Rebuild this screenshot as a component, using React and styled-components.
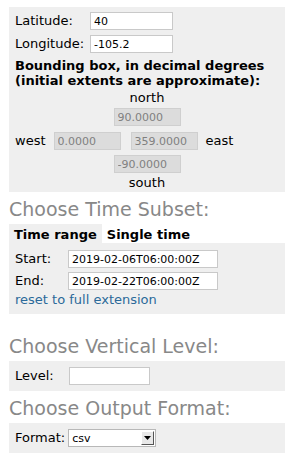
import React from "react";
import styled, { createGlobalStyle } from "styled-components";

const GlobalStyle = createGlobalStyle`
  body {
    margin: 0;
    background: #fff;
    font-family: "DejaVu Sans", Verdana, sans-serif;
    font-size: 13px;
    color: #000;
  }
`;

const App = () => {
  return (
    <>
      <GlobalStyle />
      <Page>
        <Panel pad="5px 6px 1px">
          <PointGrid>
            <Label>Latitude:</Label>
            <Field width={83} defaultValue="40" />
            <Label>Longitude:</Label>
            <Field width={83} defaultValue="-105.2" />
          </PointGrid>
          <Note>
            Bounding box, in decimal degrees (initial extents are approximate):
          </Note>
          <BoxArea>
            <Side>north</Side>
            <Field width={67} disabled defaultValue="90.0000" />
            <WestEast>
              <Side>west</Side>
              <Field width={67} disabled defaultValue="0.0000" />
              <Field width={67} disabled defaultValue="359.0000" style={{ marginLeft: 2 }} />
              <Side>east</Side>
            </WestEast>
            <Field width={67} disabled defaultValue="-90.0000" />
            <Side>south</Side>
          </BoxArea>
        </Panel>

        <Heading>Choose Time Subset:</Heading>
        <Tabs>
          <Tab active>Time range</Tab>
          <Tab>Single time</Tab>
        </Tabs>
        <Panel pad="7px 6px 6px">
          <TimeGrid>
            <Label>Start:</Label>
            <Field width={150} defaultValue="2019-02-06T06:00:00Z" />
            <Label>End:</Label>
            <Field width={150} defaultValue="2019-02-22T06:00:00Z" />
          </TimeGrid>
          <ResetLink href="#">reset to full extension</ResetLink>
        </Panel>

        <Heading spaced>Choose Vertical Level:</Heading>
        <Panel pad="6px 6px 6px">
          <InlineRow>
            <Label>Level:</Label>
            <Field width={81} defaultValue="" style={{ marginLeft: 15 }} />
          </InlineRow>
        </Panel>

        <Heading>Choose Output Format:</Heading>
        <Panel pad="6px 6px 6px">
          <InlineRow>
            <Label>Format:</Label>
            <Select>
              <span>csv</span>
              <ArrowBox>
                <svg width="7" height="4" viewBox="0 0 7 4">
                  <path d="M0 0h7L3.5 4z" fill="#000" />
                </svg>
              </ArrowBox>
            </Select>
          </InlineRow>
        </Panel>
      </Page>
    </>
  );
};

const Page = styled.div`
  width: 276px;
  padding: 7px 0 0 9px;
`;

const Panel = styled.div`
  background: #efefef;
  padding: ${(p) => p.pad};
`;

const PointGrid = styled.div`
  display: grid;
  grid-template-columns: 75px auto;
  row-gap: 5px;
  align-items: center;
`;

const TimeGrid = styled.div`
  display: grid;
  grid-template-columns: 53px auto;
  row-gap: 4px;
  align-items: center;
`;

const Label = styled.span`
  font-size: 13px;
  line-height: 16px;
`;

const Field = styled.input`
  box-sizing: border-box;
  width: ${(p) => p.width}px;
  height: 18px;
  margin: 0;
  padding: 0 3px;
  border: 1px solid #c9c9c9;
  background: #fff;
  font-family: "DejaVu Sans", Verdana, sans-serif;
  font-size: 11px;
  color: #000;
  outline: none;

  &:disabled {
    background: #dcdcdc;
    border-color: #cfcfcf;
    color: #808080;
  }
`;

const Note = styled.div`
  margin-top: 5px;
  font-weight: bold;
  font-size: 13px;
  line-height: 15px;
`;

const BoxArea = styled.div`
  display: grid;
  grid-template-rows: 18px 20px 24px 23px 18px;
  justify-items: center;
  align-items: end;
`;

const WestEast = styled.div`
  justify-self: start;
  display: flex;
  align-items: center;
  gap: 8px;
`;

const Side = styled.span`
  font-size: 13px;
  line-height: 16px;
`;

const Heading = styled.h2`
  margin: ${(p) => (p.spaced ? "21px" : "6px")} 0 4px;
  font-size: 19px;
  line-height: 22px;
  font-weight: normal;
  color: #888;
`;

const Tabs = styled.div`
  display: flex;
`;

const Tab = styled.div`
  padding: 3px 5px 1px;
  font-weight: bold;
  font-size: 13px;
  line-height: 15px;
  background: ${(p) => (p.active ? "#efefef" : "transparent")};
`;

const ResetLink = styled.a`
  display: block;
  margin-top: 2px;
  color: #2b6a9a;
  text-decoration: none;
  font-size: 13px;
  line-height: 16px;
`;

const InlineRow = styled.div`
  display: flex;
  align-items: center;
`;

const Select = styled.div`
  box-sizing: border-box;
  display: flex;
  align-items: center;
  justify-content: space-between;
  width: 88px;
  height: 18px;
  margin-left: 3px;
  padding: 0 1px 0 3px;
  border: 1px solid #b8b8b8;
  background: #fff;
  font-size: 11px;
`;

const ArrowBox = styled.div`
  box-sizing: border-box;
  width: 13px;
  height: 14px;
  display: flex;
  align-items: center;
  justify-content: center;
  background: #e8e8e8;
  border: 1px solid;
  border-color: #fff #555 #555 #fff;
`;

export default App;
